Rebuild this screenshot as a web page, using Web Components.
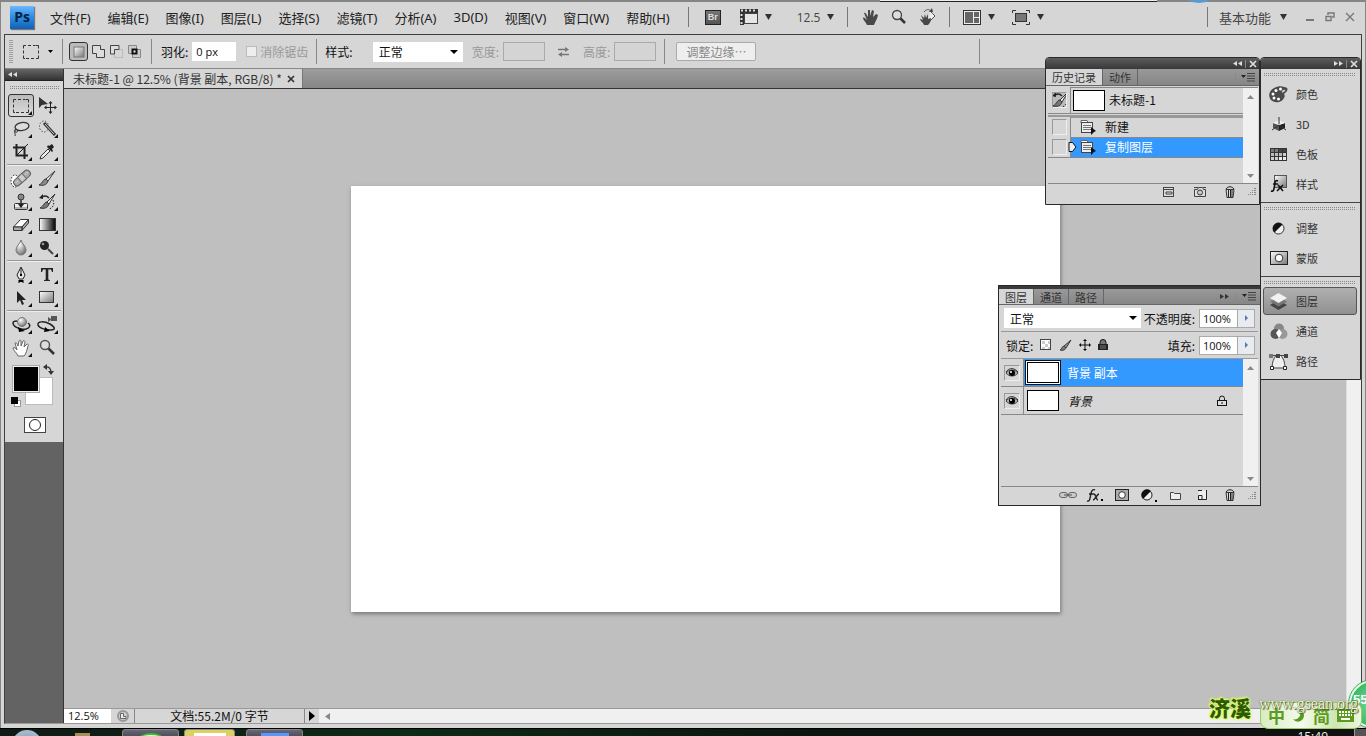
<!DOCTYPE html>
<html lang="zh-CN">
<head>
<meta charset="utf-8">
<title>Photoshop</title>
<style>
html,body{height:100%;margin:0}
body{font-family:"Open Sans","Noto Sans CJK SC",sans-serif;font-size:12px;color:#111;background:#d6d6d6;overflow:hidden}
</style>
</head>
<body>
<ps-app>
  <ps-menu-bar slot="menu"></ps-menu-bar>
  <ps-options-bar slot="options"></ps-options-bar>
  <ps-toolbox slot="tools"></ps-toolbox>
  <ps-document slot="document"></ps-document>
  <ps-history slot="float" class="history"></ps-history>
  <ps-layers slot="float" class="layers"></ps-layers>
  <ps-dock slot="float" class="dock"></ps-dock>
  <ps-taskbar slot="taskbar"></ps-taskbar>
  <ps-ime slot="float" class="ime"></ps-ime>
</ps-app>
<script>
const grad = '<defs><linearGradient id="g" x1="0" y1="0" x2="1" y2="1"><stop offset="0" stop-color="#fff"/><stop offset="1" stop-color="#777"/></linearGradient><linearGradient id="k"><stop offset="0" stop-color="#fff"/><stop offset="1" stop-color="#000"/></linearGradient><radialGradient id="r" cx=".35" cy=".3" r=".8"><stop offset="0" stop-color="#fff"/><stop offset="1" stop-color="#666"/></radialGradient></defs>';
const icons = {
  marquee:[16,14,'<path d="M.5 3.500V.5H3M5 .5h3M10 .5h2.500M13 .5h2.500v3M15.500 5.500v3M15.500 10.500v3H13M11 13.500H8M6 13.500H3M2 13.500H.5v-3M.5 8.500v-3" fill="none" stroke="#333"/>'],
  move:[20,20,'<path d="M2 1v11l3-3 6-1z" fill="#333"/><path d="M13.500 6v11M8 11.500h11" stroke="#222"/><path d="M13.500 5l2 2.500h-4zM13.500 18l2-2.500h-4zM7 11.500l2.500-2v4zM20 11.500l-2.500-2v4z" fill="#222"/>'],
  lasso:[18,16,'<ellipse cx="10" cy="5.500" rx="7" ry="4" transform="rotate(-10 10 5.500)" fill="#ddd" stroke="#333" stroke-width="1.300"/><path d="M4 8c-3 1-1 4 1 3s-1-4-2-1 1 3 0 5" fill="none" stroke="#333"/>'],
  wand:[19,18,'<ellipse cx="6" cy="6.500" rx="4.500" ry="5.500" fill="none" stroke="#555" stroke-dasharray="1.500 1.500"/><path d="M6 3l11 12" stroke="#333" stroke-width="3"/><path d="M7 4l9 10" stroke="#ccc"/>'],
  crop:[18,18,'<path d="M4.500 1v11.500H16M1 4.500h11.500V16" fill="none" stroke="#222" stroke-width="2"/><path d="M5 12L16 1" stroke="#222"/>'],
  dropper:[18,18,'<path d="M2 16l1-3 7-7 2 2-7 7z" fill="#eee" stroke="#333"/><path d="M9 4l5 5 1-1-1-2 2-2-2-3-3 2-1-1z" fill="#222"/>'],
  heal:[22,20,'<ellipse cx="5" cy="12" rx="4" ry="6" fill="#fff" stroke="#222" stroke-dasharray="1.500 1.500"/><g transform="rotate(-42 12 9)"><rect x="2" y="5.500" width="20" height="7" rx="3.500" fill="#aaa" stroke="#555"/><rect x="9" y="5.500" width="6" height="7" fill="#ccc" stroke="#666"/><path d="M4 8.500h4M17 8.500h3" stroke="#eee" stroke-dasharray="1 1"/></g>'],
  brush:[18,18,'<path d="M17 1L8 9l2 2z" fill="#eee" stroke="#333"/><path d="M8 9c-3 0-3 4-7 6 4 1 8 0 9-4z" fill="#888" stroke="#333"/>'],
  stamp:[18,18,'<circle cx="9" cy="4" r="3" fill="#888" stroke="#333"/><path d="M8 7h2v4H8z" fill="#555"/><rect x="2.500" y="10.500" width="13" height="6" rx="1" fill="#eee" stroke="#333"/><path d="M3 15h12" stroke="#777"/><path d="M6 11h6l-3 4z" fill="#222"/>'],
  historybrush:[19,18,'<path d="M17 1L9 9l2 2z" fill="#eee" stroke="#333"/><path d="M9 9c-3 0-3 4-7 6 4 1 8 0 9-4z" fill="#777" stroke="#333"/><path d="M3 5c3-3 6-2 8 0" fill="none" stroke="#222" stroke-width="1.500"/><path d="M1 5l4-4v5z" fill="#222"/><path d="M15 7c2 4 0 8-4 9" fill="none" stroke="#222" stroke-dasharray="1.500 1.500"/>'],
  eraser:[18,14,'<path d="M1.500 9l7-7.500h8L10 9z" fill="#fff" stroke="#333"/><path d="M1.500 9v3.500H10V9zM10 9l6.500-7.500V5L10 12.500z" fill="#aaa" stroke="#333"/>'],
  gradient:[17,13,'<rect x=".5" y=".5" width="16" height="12" fill="url(#k)" stroke="#333"/>'],
  blur:[14,17,'<path d="M7 1c1 4 5 6 5 10a5 5 0 0 1-10 0c0-4 4-6 5-10z" fill="url(#r)" stroke="#777"/>'],
  dodge:[16,16,'<path d="M9 9l5 5" stroke="#444" stroke-width="2"/><circle cx="5.500" cy="5.500" r="4.500" fill="#222"/><circle cx="4" cy="4" r="1.300" fill="#999"/>'],
  pen:[12,18,'<path d="M6 1L2 9l2 4h4l2-4z" fill="#eee" stroke="#222"/><path d="M6 2v6" stroke="#222"/><circle cx="6" cy="9" r="1.200"/><path d="M3.500 14h5v3h-1v-1h-3v1h-1z"/>'],
  type:[14,15,'<path d="M1 1h12v4h-1l-1-2.500H8.300V12.500l1.700.7V14H4v-.8l1.700-.7V2.500H3L2 5H1z" fill="#222"/>'],
  path:[12,16,'<path d="M2 1v12l3-3 2 5 2-1-2-4h4z" fill="#222"/>'],
  shape:[16,13,'<rect x=".5" y=".5" width="14" height="11" fill="url(#g)" stroke="#333"/>'],
  orbit:[20,18,'<path d="M17 7c3 2 2 5-2 6-5 1-13-2-13-6 0-2 3-2 4-2" fill="none" stroke="#222" stroke-width="1.500"/><circle cx="11" cy="6" r="4.500" fill="url(#r)" stroke="#777"/><path d="M7 11l7 4-6 1z"/>'],
  camera:[22,18,'<path d="M2 9C1 5 8 5 14 8c5 3 6 6 1 6C9 14 3 12 2 9z" fill="none" stroke="#222" stroke-width="1.500"/><path d="M9 11l5 4-6 1z"/><path d="M12 1v5l3-2V3zM15 0h6v5h-6z" fill="#555"/>'],
  hand:[18,18,'<path d="M6 17C5 14 1 11 1 9c1-1 3 0 4 2L3 4c1-1 2 0 3 3L7 2c1-1 2-1 2 0v5l2-5c1-1 2 0 2 1l-1 5 3-3c1 0 2 1 1 2-1 4-2 8-4 10z" fill="#fff" stroke="#666"/>'],
  zoom:[17,17,'<path d="M9 9l6 6" stroke="#333" stroke-width="2.500"/><circle cx="6" cy="6" r="4.500" fill="#ddd" stroke="#555" stroke-width="1.500"/>'],
  hand2:[17,17,'<path d="M5 16C4 13 1 11 1 9c1-1 2 0 4 2L2 4c1-1 2 0 4 4V1h2v6l2-6 2 1-1 6 3-3 2 1c-1 5-3 7-4 10z" fill="#484848"/>'],
  zoom2:[16,16,'<path d="M9 9l5 5" stroke="#333" stroke-width="2.500"/><circle cx="6" cy="6" r="4.500" fill="#ddd" stroke="#444" stroke-width="1.300"/>'],
  rotate:[18,18,'<path d="M11 3l5 5-6 6" fill="#eee" stroke="#555"/><path d="M5 17c-1-3-4-4-4-6l3 1-2-5 3 3 1-4 1 4 2-4v5l3-1c0 3-1 5-3 7z" fill="#484848"/><path d="M5 4c2-3 5-3 7-1" fill="none" stroke="#555"/><path d="M14 4h-4l3-4z" fill="#444"/>'],
  film:[18,16,'<path d="M0 0h18v4H4v12H0z" fill="#333"/><path d="M1 1.500h16" stroke="#ddd" stroke-width="2" stroke-dasharray="2 2"/><path d="M1.500 5v10" stroke="#ddd" stroke-width="2" stroke-dasharray="2 2"/><rect x="4.500" y="4.500" width="13" height="10" fill="#e6e6e6" stroke="#444"/>'],
  arrange:[18,15,'<rect x=".5" y=".5" width="17" height="14" fill="#eee" stroke="#333"/><path d="M2 2h8v11H2zM11 2h5v5h-5zM11 8h5v5h-5z" fill="#666"/>'],
  screen:[18,15,'<path d="M.5 3V.5H4M14 .5h3.500V3M17.500 12v2.500H14M4 14.500H.5V12" fill="none" stroke="#333"/><rect x="3.500" y="3.500" width="11" height="8" fill="#777" stroke="#333"/>'],
  down:[7,6,'<path d="M0 0h7L3.500 6z" fill="#333"/>'],
  down5:[5,3,'<path d="M0 0h5L2.500 3z"/>'],
  min:[10,10,'<path d="M1 8h8" stroke="#777" stroke-width="2"/>'],
  restore:[10,10,'<path d="M3 3V1h6v4H7M1 4.500h5v4H1z" fill="none" stroke="#777" stroke-width="1.400"/>'],
  close:[10,10,'<path d="M1 1l8 8M9 1L1 9" stroke="#777" stroke-width="1.300"/>'],
  x:[8,8,'<path d="M1 1l6 6M7 1L1 7" stroke="currentColor" stroke-width="1.700"/>'],
  left2:[9,5,'<path d="M4 0v5L0 2.500zM9 0v5L5 2.500z" fill="currentColor"/>'],
  right2:[9,5,'<path d="M0 0v5l4-2.500zM5 0v5l4-2.500z" fill="currentColor"/>'],
  flyout:[14,9,'<path d="M0 2h5L2.500 5z" fill="#222"/><path d="M6 .5h8M6 3h8M6 5.500h8M6 8h8" stroke="#444"/>'],
  selnew:[12,12,'<rect x="1" y="1" width="10" height="10" fill="url(#g)" stroke="#777"/>'],
  seladd:[14,14,'<path d="M.5.500h8v4h4v8h-8v-4h-4z" fill="#ddd" stroke="#444"/>'],
  selsub:[14,14,'<rect x="4.500" y="4.500" width="8" height="8" fill="none" stroke="#bbb"/><path d="M.5 9V.500H9v4H4.500V9z" fill="#ddd" stroke="#444"/>'],
  selint:[14,14,'<path d="M.5.500h8v8h-8zM4.500 4.500h8v8h-8z" fill="#ccc" stroke="#888"/><rect x="4.500" y="4.500" width="4" height="4" fill="#eee" stroke="#111" stroke-width="2"/>'],
  swap:[13,10,'<path d="M1 2.500h8M4 7.500h8" stroke="#777" stroke-width="1.500"/><path d="M8 0l4 2.500L8 5zM5 5L1 7.500 5 10z" fill="#777"/>'],
  swapcolors:[11,11,'<path d="M2 3c4-1 6 2 6 5" fill="none" stroke="#333" stroke-width="1.300"/><path d="M0 3l4-3v6zM5 7h6l-3 4z" fill="#333"/>'],
  defcolors:[10,10,'<rect x="3.500" y="3.500" width="6" height="6" fill="#fff" stroke="#999"/><rect width="7" height="7"/>'],
  mask:[18,14,'<rect x=".5" y=".5" width="17" height="13" fill="url(#g)" stroke="#222"/><circle cx="9" cy="7" r="3.800" fill="#fff" stroke="#333"/>'],
  maskf:[14,12,'<rect x=".5" y=".5" width="13" height="11" fill="#aaa" stroke="#222"/><circle cx="7" cy="6" r="3.300" fill="#fff" stroke="#333"/>'],
  palette:[19,17,'<path d="M15 1c5 0 4 4 1 6-2 1 1 3-1 5-2 4-6 5-9 4-5-1-7-6-5-10C3 2 10-1 15 1z" fill="#4a4a4a"/><path d="M13 5c2-2 4-1 3 0s-4 3-3 0z" fill="#ccc"/><g fill="#fff"><circle cx="4" cy="8" r="1.500"/><circle cx="7" cy="4.500" r="1.500"/><circle cx="11.500" cy="3" r="1.500"/><circle cx="5" cy="12" r="1.500"/><circle cx="9.500" cy="13" r="1.500"/></g>'],
  cube:[16,16,'<path d="M2 7l6 2v6l-6-3z" fill="#555"/><path d="M14 7l-6 2v6l6-3z" fill="#222"/><path d="M2 7l6-3 6 3-6 2z" fill="#eee"/><path d="M8 1v7M8 9l7 5M8 9l-7 5" stroke="#333"/>'],
  swatches:[17,13,'<path d="M0 0h17v13H0z" fill="#333"/><path d="M1 1h3v3H1zM5 1h3v3H5z" fill="#777"/><path d="M9 1h3v3H9zM13 1h3v3h-3z" fill="#444"/><path d="M1 5h3v3H1zM5 5h3v3H5zM9 5h3v3H9z" fill="#bbb"/><path d="M13 5h3v3h-3zM1 9h3v3H1zM5 9h3v3H5z" fill="#ccc"/><path d="M9 9h3v3H9zM13 9h3v3h-3z" fill="#eee"/>'],
  styles:[18,18,'<rect x="4.500" y=".5" width="12" height="12" fill="url(#g)" stroke="#555"/><path d="M1 16c3 1 3-2 4-8 0-2 1-3 3-2M3 9h5M8 10l5 6M13 10l-6 6" fill="none" stroke="#111" stroke-width="1.600"/>'],
  adjust:[13,13,'<circle cx="6.500" cy="6.500" r="5.500" fill="#eee" stroke="#333"/><path d="M2.500 10.500A5.600 5.600 0 0 1 10.500 2.500z" fill="#111"/>'],
  layers:[19,17,'<path d="M9.500 7l8.500 5-8.500 5L1 12z" fill="#444"/><path d="M9.500 4L18 8.500l-8.500 5L1 8.500z" fill="#777"/><path d="M9.500 0L18 5l-8.500 5L1 5z" fill="#f2f2f2"/>'],
  channels:[18,17,'<circle cx="9" cy="5.500" r="5" fill="#888"/><circle cx="5.500" cy="11" r="5" fill="#555"/><circle cx="12.500" cy="11" r="5" fill="#999"/><path d="M9 6l3 4-3 5-3-5z" fill="#fff"/>'],
  paths:[19,17,'<path d="M3 15C3 9 5 5 7 2.500h5c2 3 4 6 4 12.500z" fill="#eee" stroke="#444"/><path d="M2 2.500h15" stroke="#444"/><path d="M0 1h4v4H0z" fill="#777"/><path d="M7 1h4v4H7zM15 1h4v4h-4z" fill="#444"/><path d="M1.500 13.500h3v3h-3zM14.500 13.500h3v3h-3z" fill="#fff" stroke="#222"/>'],
  state:[16,16,'<path d="M1 4V1.500h6l1 2" fill="#fff" stroke="#666"/><rect x="1.500" y="3.500" width="11" height="10" fill="#eee" stroke="#444"/><path d="M3 6.500h8M3 8.500h8M3 10.500h8" stroke="#777"/><path d="M11 8l5 4-2 1-3 3z" fill="#111"/>'],
  marker:[9,10,'<path d="M1 .500h3.500L8 5 4.500 9.500H1z" fill="#eee" stroke="#111"/>'],
  newdoc:[12,10,'<rect x=".5" y=".5" width="10" height="9" fill="#ddd" stroke="#444"/><path d="M1 2.500h10M3 5h6v2H3z" stroke="#444" fill="none"/>'],
  snap:[14,11,'<path d="M1.500 3.500h3l1-2h4l1 2h2v7h-11z" fill="#ddd" stroke="#444"/><path d="M1 1.500h4M10 1.500h3" stroke="#444"/><circle cx="7" cy="6.500" r="2.500" fill="#ccc" stroke="#333"/>'],
  trash:[10,12,'<path d="M1 3.500h8L8 11.500H2z" fill="#ddd" stroke="#333"/><path d="M3.500 4v7M5.500 4v7M7 4v7M1 3c2-3 6-3 8 0" stroke="#222" fill="none"/>'],
  grip:[9,9,'<path d="M7 1h2v1H7zM5 3h1v1H5zM7 3h2v1H7zM3 5h1v1H3zM5 5h1v1H5zM7 5h2v1H7zM1 7h1v1H1zM3 7h1v1H3zM5 7h1v1H5zM7 7h2v1H7z" fill="#888"/>'],
  checker:[12,12,'<rect x=".5" y=".5" width="10" height="10" fill="#fff" stroke="#444"/><path d="M2 2h3v3H2zM5 5h3v3H5zM8 2h2v3H8zM2 8h3v2H2zM8 8h2v2H8z" fill="#ccc"/>'],
  brush12:[13,13,'<path d="M12 1L5 7l2 2z" fill="#999" stroke="#333"/><path d="M5 7c-2 0-2 3-4 4 3 1 5 0 6-2z" fill="#777" stroke="#444"/>'],
  cross:[12,12,'<path d="M6 1v10M1 6h10" stroke="#111"/><path d="M6 0l2 2H4zM6 12l2-2H4zM0 6l2-2v4zM12 6l-2-2v4z"/>'],
  lockf:[10,12,'<path d="M2 5V3.500a3 3 0 0 1 6 0V5" fill="#777" stroke="#111"/><path d="M0 5h10v6H0z" fill="#222"/><path d="M2 7h6M2 9h6" stroke="#777"/>'],
  lock:[10,12,'<path d="M2.500 5V3.500a2.500 2.500 0 0 1 5 0V5" fill="none" stroke="#111"/><rect x=".5" y="5.500" width="9" height="5" fill="#ddd" stroke="#111"/><path d="M5 7v2" stroke="#111"/>'],
  eye:[14,10,'<path d="M1 5c3-4 9-4 12 0-3 4-9 4-12 0z" fill="#aaa" stroke="#444"/><circle cx="7" cy="5" r="3"/><path d="M1 4c3-5 9-4 12 0" fill="none" stroke="#333"/><circle cx="6" cy="4" r="1" fill="#fff"/>'],
  link:[18,8,'<rect x=".5" y="1.500" width="8" height="5" rx="2.500" fill="#ccc" stroke="#666"/><rect x="9.500" y="1.500" width="8" height="5" rx="2.500" fill="#ccc" stroke="#666"/><path d="M5 4h8" stroke="#555"/>'],
  fx:[17,14,'<path d="M1 13c3 1 3-3 4-8 1-3 2-4 4-3M3 6h5M8 6c2 0 2 6 4 6M13 6c-2 0-4 6-6 6" fill="none" stroke="#222" stroke-width="1.400"/><path d="M15 11h2v2h-2z"/>'],
  adjustf:[16,13,'<circle cx="6" cy="6" r="5" fill="#eee" stroke="#222"/><path d="M2 10A5.600 5.600 0 0 1 10 2z" fill="#111"/><path d="M14 11h2v2h-2z"/>'],
  folder:[12,9,'<path d="M.5 8.500v-7h3l1 1h6v6z" fill="#eee" stroke="#444"/>'],
  newlayer:[11,11,'<path d="M1.500.500h8v9h-8z" fill="#eee"/><path d="M1 .500h4M9.500 0v9.500H1M1.500 10V5.500H5V9" fill="none" stroke="#222"/>'],
  up7:[7,4,'<path d="M0 4h7L3.500 0z" fill="#888"/>'],
  dn7:[7,4,'<path d="M0 0h7L3.500 4z" fill="#888"/>'],
  clockface:[12,12,'<circle cx="6" cy="6" r="5" fill="#ccc" stroke="#999" stroke-width="2"/><path d="M3.500 3.500h3v3H9v2H3.500z" fill="#eee" stroke="#666"/>'],
  play:[6,10,'<path d="M0 0v10l6-5z"/>'],
  tri:[3,6,'<path d="M0 0v6l3-3z" fill="#5878b0"/>'],
  back:[5,7,'<path d="M5 0v7L0 3.500z" fill="#888"/>'],
  keyboard:[17,13,'<path d="M0 0h17v13H0z" fill="#5b9b20"/><path d="M2 3h13M2 6h13" stroke="#fff" stroke-width="2" stroke-dasharray="2 1"/><path d="M4 10h9" stroke="#fff" stroke-width="2"/>'],
  moon:[14,14,'<path d="M8 1a6 6 0 1 1-7 9c4 2 9-3 7-9z" fill="#5b9b20"/>']
};
const base = '<style>*,:host{box-sizing:border-box}button,input,select{font:inherit;color:inherit;margin:0;padding:0;border:0;background:none;border-radius:0;outline:0}button{display:flex;align-items:center;justify-content:center;white-space:nowrap}</style>';
const ic = n => `<ps-icon name="${n}"></ps-icon>`;
function define(name, html, setup){
  const t = document.createElement('template');
  t.innerHTML = base + html;
  customElements.define(name, class extends HTMLElement{
    constructor(){ super(); this.attachShadow({mode:'open'}).append(t.content.cloneNode(true)); if(setup) setup(this.shadowRoot, this); }
  });
}
customElements.define('ps-icon', class extends HTMLElement{
  connectedCallback(){
    if(this.shadowRoot) return;
    const [w,h,s] = icons[this.getAttribute('name')];
    this.attachShadow({mode:'open'}).innerHTML = `<style>:host{display:block;flex:none}svg{display:block}</style><svg width="${w}" height="${h}" viewBox="0 0 ${w} ${h}" aria-hidden="true">${s.includes('url(')?grad:''}${s}</svg>`;
  }
});
define('ps-grip', '<style>:host{display:block;height:4px;background:repeating-linear-gradient(90deg,#888 0 1px,transparent 1px 2px) 0 0/100% 1px repeat-x,repeating-linear-gradient(90deg,#888 0 1px,transparent 1px 2px) 0 2px/100% 1px repeat-x}</style>');

define('ps-app', `<style>
:host{display:flex;flex-direction:column;height:100vh;position:relative;overflow:hidden;background:#d6d6d6}
.frame{flex:1;min-height:0;display:flex;flex-direction:column;border:1px solid #858585;border-bottom:0;border-top-width:2px;padding:0 3px 4px}
.inner{flex:1;min-height:0;display:flex;flex-direction:column;border:1px solid #3c423c;border-bottom-color:#999}
.work{flex:1;min-height:0;display:flex}
slot[name=tools]{display:block}
slot[name=document]::slotted(*){flex:1;min-width:0}
::slotted(.history){position:absolute;right:106px;top:57px}
::slotted(.layers){position:absolute;right:105px;top:285px}
::slotted(.dock){position:absolute;right:5px;top:57px}
::slotted(.ime){position:absolute;right:0;bottom:7px}
.sheet{position:absolute;left:880px;top:0;right:209px;height:2px;background:#eee;border-bottom:1px solid #222}
.orb{position:absolute;right:152px;top:-15px;width:30px;height:18px;border-radius:50%;background:#5a9ad0}
</style>
<div class="frame"><slot name="menu"></slot><div class="inner"><slot name="options"></slot><div class="work"><slot name="tools"></slot><slot name="document"></slot></div></div></div>
<slot name="taskbar"></slot><div class="sheet"></div><div class="orb"></div><slot name="float"></slot>`);

define('ps-menu-bar', `<style>
:host{display:flex;height:32px;align-items:center;padding:0 7px 2px 6px;font-size:13px;color:#222}
.logo{width:24px;height:23px;background:linear-gradient(#6cb8ff,#2f8fe4 45%,#0f62b4);color:#06203f;font:bold 14px/21px "Open Sans",sans-serif;text-align:center;margin-right:16px;box-shadow:1px 1px 1px #777}
nav{display:flex;gap:17px}
nav button{height:24px;font-family:"Noto Sans","Noto Sans CJK SC",sans-serif}
.sep{width:1px;height:20px;background:#777;flex:none}
.tools{display:flex;align-items:center;margin-left:18px}
.pair{gap:7px}
.br{width:16px;height:15px;background:linear-gradient(#777,#555);border:1px solid #222;color:#ddd;font:bold 9px/12px "Liberation Sans",sans-serif}
.right{display:flex;align-items:center;margin-left:auto;gap:11px}
.right .pair{color:#444;gap:9px}
.win{display:flex;gap:10px;margin-left:7px}
.z{font-size:12px;font-family:"Open Sans",sans-serif;color:#444}
</style>
<div class="logo">Ps</div><nav></nav>
<div class="tools"><i class="sep"></i><button class="br" style="margin:0 19px 0 16px">Br</button><button class="pair">${ic('film')}${ic('down')}</button>
<button class="pair z" style="margin:0 13px 0 25px">12.5${ic('down')}</button><i class="sep"></i>
<button style="margin-left:14px">${ic('hand2')}</button><button style="margin:0 12px">${ic('zoom2')}</button><button style="margin-right:12px">${ic('rotate')}</button><i class="sep"></i>
<button class="pair" style="margin:0 17px 0 13px">${ic('arrange')}${ic('down')}</button><button class="pair">${ic('screen')}${ic('down')}</button></div>
<div class="right"><i class="sep"></i><button class="pair">基本功能${ic('down')}</button><div class="win"><button aria-label="最小化">${ic('min')}</button><button aria-label="还原">${ic('restore')}</button><button aria-label="关闭">${ic('close')}</button></div></div>`,
r => { r.querySelector('nav').innerHTML = ['文件(F)','编辑(E)','图像(I)','图层(L)','选择(S)','滤镜(T)','分析(A)','3D(D)','视图(V)','窗口(W)','帮助(H)'].map(x=>`<button>${x}</button>`).join(''); });

define('ps-options-bar', `<style>
:host{display:flex;height:34px;align-items:center;border-bottom:1px solid #888;padding-left:4px;white-space:nowrap;font-family:"Noto Sans CJK SC",sans-serif}
.sep{width:1px;height:25px;background:#888;flex:none}
.grip{width:4px;height:23px;background:repeating-linear-gradient(#888 0 1px,transparent 1px 2px);opacity:.7}
.tool{gap:9px;margin:0 9px 0 10px}
.modes{display:flex;align-items:center;gap:3px;margin:0 9px 0 6px}
.modes .on{width:19px;height:19px;border:1px solid #333;border-radius:3px;background:#bbb}
.modes button{width:15px}
.field{display:flex;align-items:center}
input[type=text]{height:19px;width:44px;background:#fff;padding-left:4px;margin-left:4px;font-family:"Open Sans",sans-serif;font-size:11px}
input[type=text]:disabled{background:#d4d4d4;border:1px solid #aaa;width:42px}
.off{color:#999}
input[type=checkbox]{appearance:none;width:11px;height:11px;border:1px solid #bbb;background:#eee;margin-right:3px}
select{appearance:none;width:90px;height:20px;background:#fff url("data:image/svg+xml,%3Csvg xmlns='http://www.w3.org/2000/svg' width='8' height='4'%3E%3Cpath d='M0 0h8L4 4z'/%3E%3C/svg%3E") no-repeat right 5px center;padding-left:6px;margin-left:20px}
.edge{width:80px;height:19px;border:1px solid #aaa;border-radius:2px;background:#eee;color:#888}
</style>
<div class="grip"></div><button class="tool" aria-label="矩形选框">${ic('marquee')}${ic('down5')}</button><i class="sep"></i>
<div class="modes"><button class="on" aria-label="新选区">${ic('selnew')}</button><button aria-label="添加">${ic('seladd')}</button><button aria-label="减去">${ic('selsub')}</button><button aria-label="交叉">${ic('selint')}</button></div><i class="sep"></i>
<label class="field" style="margin:0 10px 0 9px">羽化:<input type="text" value="0 px"></label>
<label class="field off"><input type="checkbox" disabled>消除锯齿</label><i class="sep" style="margin:0 8px"></i>
<label class="field">样式:<select><option>正常</option></select></label>
<label class="field off" style="margin:0 12px 0 9px">宽度:<input type="text" disabled></label><ps-icon name="swap"></ps-icon>
<label class="field off" style="margin:0 8px 0 13px">高度:<input type="text" disabled></label><i class="sep"></i>
<button class="edge" style="margin-left:11px">调整边缘…</button><i class="sep" style="margin-left:223px"></i>`);

define('ps-toolbox', `<style>
:host{display:flex;flex-direction:column;width:59px;height:100%;background:#636363;border-right:1px solid #333}
.head{height:12px;background:linear-gradient(#666,#333);color:#ddd;padding:3px 3px;border-bottom:1px solid #222}
.box{background:#d6d6d6;padding:5px 0 9px;flex:none}
ps-grip{margin:0 4px 4px 5px}
.group{display:grid;grid-template-columns:26px 26px;padding-left:3px;grid-auto-rows:23px}
.group button{position:relative;width:26px;height:23px;border:1px solid transparent}
.group button.on{border-color:#333;border-radius:3px;background:linear-gradient(#bbb,#ddd)}
.group button.more::after{content:"";position:absolute;right:1px;bottom:1px;border:2px solid #111;border-top-color:transparent;border-left-color:transparent}
.rule{height:1px;background:#999;margin:1px 2px 2px;box-shadow:0 1px #eee}
.colors{position:relative;height:47px;margin:4px 0 7px}
.colors button{position:absolute}
.fg{left:8px;top:3px;width:26px;height:26px;background:#000;border:1px solid #eee;outline:1px solid #aaa}
.bg{left:20px;top:14px;width:28px;height:28px;background:#fff;border:1px solid #bbb}
.qm{width:22px;height:16px;border:1px solid #444;background:#fff;margin-left:19px}
.qm i{width:12px;height:12px;border:1px solid #222;border-radius:50%}
</style><div class="head">${ic('left2')}</div><div class="box"><ps-grip></ps-grip><div class="groups"></div>
<div class="colors"><button class="bg" aria-label="背景色"></button><button class="fg" aria-label="前景色"></button><button style="left:38px;top:1px" aria-label="切换颜色">${ic('swapcolors')}</button><button style="left:6px;top:34px" aria-label="默认颜色">${ic('defcolors')}</button></div>
<button class="qm" aria-label="快速蒙版"><i></i></button></div>`,
r => { r.querySelector('.groups').innerHTML = [['marquee','move','lasso','wand','crop','dropper'],['heal','brush','stamp','historybrush','eraser','gradient','blur','dodge'],['pen','type','path','shape'],['orbit','camera','hand','zoom']]
 .map(g=>'<div class="group">'+g.map(n=>`<button aria-label="${n}" class="${n==='marquee'?'on ':''}${n==='move'||n==='zoom'?'':'more'}">${ic(n)}</button>`).join('')+'</div>').join('<div class="rule"></div>'); });

define('ps-document', `<style>
:host{display:flex;flex-direction:column}
.tabs{height:20px;background:linear-gradient(#9c9c9c,#868686);border-bottom:1px solid #333;display:flex;flex:none}
.tab{width:239px;height:19px;background:#d6d6d6;border-right:1px solid #777;display:flex;align-items:center;justify-content:space-between;padding:0 7px 0 9px;white-space:nowrap;color:#333;font-family:"Noto Sans CJK SC",sans-serif}
.view{flex:1;min-height:0;display:flex}
.canvas{flex:1;background:#bfbfbf;display:flex;align-items:center;justify-content:center}
.page{width:709px;height:426px;background:#fff;box-shadow:1px 2px 4px #777}
.vs{width:15px;background:#f0f0f0;flex:none;border-left:1px solid #ddd}
.status{height:15px;flex:none;display:flex;align-items:center;background:#d6d6d6;border-top:1px solid #999;font-family:"Noto Sans CJK SC",sans-serif;line-height:14px;white-space:nowrap}
.status input{width:47px;height:14px;background:#fff;font-size:11px;padding-left:4px;font-family:"Open Sans",sans-serif}
.info{width:171px;height:14px;text-align:center;border:1px solid #888;border-width:0 1px;margin-left:5px}
.hs{flex:1;height:14px;background:#f0f0f0;margin-left:4px;display:flex;align-items:center;padding-left:6px}
</style>
<div class="tabs"><div class="tab"><span>未标题-1 @ 12.5% (背景 副本, RGB/8) *</span><button aria-label="关闭">${ic('x')}</button></div></div>
<div class="view"><div class="canvas"><div class="page"></div></div><div class="vs"></div></div>
<div class="status"><input aria-label="缩放" value="12.5%"><button style="margin-left:6px" aria-label="版本">${ic('clockface')}</button><div class="info">文档:55.2M/0 字节</div><button style="margin-left:4px" aria-label="菜单">${ic('play')}</button><div class="hs">${ic('back')}</div></div>`);

define('ps-panel', `<style>
:host{display:flex;flex-direction:column;border:1px solid #2a2a2a;background:#d6d6d6}
.head{height:11px;flex:none;background:linear-gradient(#5c5c5c,#383838);color:#ddd;display:flex;align-items:center;justify-content:flex-end;padding-right:2px;gap:3px}
.head i,.tabs i{width:1px;height:8px;background:#888}
:host([thin]) .head{height:3px;overflow:hidden;visibility:hidden}
:host([thin]){background:linear-gradient(#3a3a3a 3px,#d6d6d6 3px)}
.tabs{height:17px;display:flex;background:linear-gradient(#999,#868686);border-bottom:1px solid #666;align-items:center;flex:none}
:host([thin]) .tabs{height:16px}
.extra{margin-left:auto;display:flex;align-items:center;gap:5px;padding-right:4px;color:#333}
:host([thin]) .extra{gap:6px}
:host(:not([thin])) .x{display:none}
slot[name=body]::slotted(*){flex:1}
.foot{height:18px;flex:none;padding-bottom:2px;display:flex;align-items:center;justify-content:flex-end}
:host(:not([thin])) .foot{height:20px;padding-bottom:5px}
</style><div class="head">${ic('left2')}<i></i>${ic('x')}</div>
<div class="tabs"><slot name="tab"></slot><div class="extra"><ps-icon class="x" name="right2"></ps-icon><i></i>${ic('flyout')}</div></div>
<slot name="body"></slot><div class="foot"><slot name="foot"></slot></div>`);
const tabCss = '.tab{height:100%;padding:0 6px;border-right:1px solid #666;font-size:11px;color:#333;font-family:"Noto Sans CJK SC",sans-serif}.tab.on{background:#d6d6d6}';
const scroll = `<div class="scroll">${ic('up7')}${ic('dn7')}</div>`;
const scrollCss = '.scroll{width:15px;background:#f0f0f0;display:flex;flex-direction:column;align-items:center;justify-content:space-between;padding:7px 0 5px;flex:none}';

define('ps-history', `<style>
:host{display:block;width:215px}${tabCss}${scrollCss}
ps-panel{height:148px;border-radius:4px 4px 0 0;overflow:hidden}
.body{display:flex;margin:1px 1px 0 2px;min-height:0;border-top:1px solid #888;border-bottom:1px solid #888}
.list{flex:1;font-family:"Noto Sans CJK SC",sans-serif}
.row{height:20px;display:flex;align-items:center;border-bottom:1px solid #888;line-height:16px;padding-bottom:1px}
.c{width:23px;height:20px;border-right:1px solid #888;display:flex;align-items:center;justify-content:center;flex:none;position:relative;background:#d6d6d6}
.c i{width:15px;height:16px;border:1px solid #999;border-right-color:#eee;border-bottom-color:#eee}
.c .ib{overflow:hidden;background:#bbb}
.snap{height:26px}.snap .c{height:26px}.thumb{width:32px;height:21px;border:1px solid #000;background:#fff;margin:0 4px 0 2px}
.bar{height:4px;border-bottom:3px solid #999}
.row ps-icon{margin:0 9px 0 9px}.row .ib ps-icon{margin:-2px}
.sel{background:#39f;color:#fff}.sel .c ps-icon{position:absolute;right:-7px;margin:0}
.ft{display:flex;align-items:center;gap:18px;padding-right:3px}.ft button:last-child{margin-left:-6px}
</style><ps-panel><button slot="tab" class="tab on">历史记录</button><button slot="tab" class="tab">动作</button>
<div slot="body" class="body"><div class="list"><div class="row snap"><span class="c"><i class="ib">${ic('historybrush')}</i></span><span class="thumb"></span>未标题-1</div><div class="bar"></div>
<div class="row"><span class="c"><i></i></span>${ic('state')}新建</div><div class="row sel"><span class="c"><i></i>${ic('marker')}</span>${ic('state')}复制图层</div></div>${scroll}</div>
<div slot="foot" class="ft"><button aria-label="新文档">${ic('newdoc')}</button><button aria-label="快照">${ic('snap')}</button><button aria-label="删除">${ic('trash')}</button><button aria-label="调整大小">${ic('grip')}</button></div></ps-panel>`);

define('ps-layers', `<style>
:host{display:block;width:263px}${tabCss}${scrollCss}
ps-panel{height:221px}
.body{display:flex;flex-direction:column;margin:0 2px;font-family:"Noto Sans CJK SC",sans-serif;min-height:0;border-bottom:1px solid #888}
.row{height:27px;display:flex;align-items:center;border-bottom:1px solid #999;padding:0 3px;flex:none}
select{appearance:none;width:137px;height:20px;background:#fff url("data:image/svg+xml,%3Csvg xmlns='http://www.w3.org/2000/svg' width='8' height='4'%3E%3Cpath d='M0 0h8L4 4z'/%3E%3C/svg%3E") no-repeat right 4px center;padding-left:6px}
label{display:flex;align-items:center;margin-left:auto}
label input{width:39px;height:19px;border:1px solid #aaa;background:#fff;margin-left:4px;padding-left:3px;font-family:"Open Sans",sans-serif;font-size:11px}
.row button.spin{width:17px;height:19px;border:1px solid #aaa;border-left:0;background:#e8ebf0}
.locks{display:flex;gap:7px;margin-left:7px}
.area{flex:1;display:flex;min-height:0}.list{flex:1}
.layer{height:28px;display:flex;align-items:center;border-bottom:1px solid #888}
.eye{width:23px;align-self:stretch;border-right:1px solid #888;background:#d6d6d6;display:flex;align-items:center;justify-content:center}
.eye button{width:16px;height:16px;border:1px solid #999;border-right-color:#eee;border-bottom-color:#eee}
.thumb{width:32px;height:21px;border:1px solid #000;background:#fff;margin:0 9px 0 3px}
.sel{background:#39f;color:#fff}.sel .thumb{outline:1px solid #fff;box-shadow:0 0 0 2px #111;margin-right:8px}
em{flex:1}.lk{margin-right:16px}
.ft{display:grid;grid-template-columns:repeat(7,27px) 17px;justify-items:center;align-items:center}
</style><ps-panel thin><button slot="tab" class="tab on">图层</button><button slot="tab" class="tab">通道</button><button slot="tab" class="tab">路径</button>
<div slot="body" class="body"><div class="row"><select aria-label="混合模式"><option>正常</option></select><label>不透明度:<input value="100%"></label><button class="spin" aria-label="不透明度">${ic('tri')}</button></div>
<div class="row"><span style="margin-left:2px">锁定:</span><span class="locks">${ic('checker')}${ic('brush12')}${ic('cross')}${ic('lockf')}</span><label>填充:<input value="100%"></label><button class="spin" aria-label="填充">${ic('tri')}</button></div>
<div class="area"><div class="list"><div class="layer sel"><span class="eye"><button aria-label="可见">${ic('eye')}</button></span><span class="thumb"></span>背景 副本</div>
<div class="layer"><span class="eye"><button aria-label="可见">${ic('eye')}</button></span><span class="thumb"></span><em>背景</em><ps-icon class="lk" name="lock"></ps-icon></div></div>${scroll}</div></div>
<div slot="foot" class="ft"><button>${ic('link')}</button><button>${ic('fx')}</button><button>${ic('maskf')}</button><button>${ic('adjustf')}</button><button>${ic('folder')}</button><button>${ic('newlayer')}</button><button>${ic('trash')}</button><button>${ic('grip')}</button></div></ps-panel>`);

define('ps-dock', `<style>
:host{display:block;width:101px;border:1px solid #2a2a2a;background:#d6d6d6;border-radius:4px 4px 0 0;overflow:hidden;font-size:11px;color:#333;font-family:"Noto Sans CJK SC",sans-serif}
.head{height:11px;background:linear-gradient(#5c5c5c,#383838);color:#ddd;display:flex;align-items:center;justify-content:flex-end;padding-right:2px;gap:3px}
.head i{width:1px;height:8px;background:#888}
section{border-bottom:1px solid #444;padding:4px 3px 3px 2px}
section:last-child{border:0}
ps-grip{margin:0 1px 2px}
section button{width:100%;height:30px;justify-content:flex-start;border:1px solid transparent}
section button.on{border-color:#555;border-radius:3px;background:linear-gradient(#b0b0b0,#909090);height:28px;margin:1px 0}
.i{width:32px;display:flex;justify-content:center;padding-right:3px}
</style><div class="head">${ic('right2')}<i></i>${ic('x')}</div><div class="all"></div>`,
r => { r.querySelector('.all').innerHTML=[[['palette','颜色'],['cube','3D'],['swatches','色板'],['styles','样式']],[['adjust','调整'],['mask','蒙版']],[['layers','图层'],['channels','通道'],['paths','路径']]]
 .map(s=>'<section><ps-grip></ps-grip>'+s.map(([i,t])=>`<button class="${i==='layers'?'on':''}"><span class="i">${ic(i)}</span>${t}</button>`).join('')+'</section>').join(''); });

define('ps-taskbar', `<style>
:host{display:flex;height:8px;flex:none;background:linear-gradient(90deg,#101a16,#0c2a16 30%,#0b1510 60%,#111);overflow:hidden;border-top:1px solid #000;align-items:flex-start;color:#eee;font-size:12px;line-height:12px}
.orb{width:30px;height:30px;border-radius:50%;background:radial-gradient(#79a,#bcd);margin-left:12px;margin-top:1px;flex:none}
.f{width:15px;height:5px;background:#a98f57;margin:4px 32px 0 33px}
.t{width:57px;height:16px;border:1px solid #888;border-radius:3px;background:linear-gradient(#667,#333);margin-right:5px;display:flex;justify-content:center;overflow:hidden}
.y{width:51px;background:#dcd060;margin-right:11px}.y i{width:32px;height:9px;background:#fff;margin-top:3px}
.b i{width:28px;height:9px;background:#59f;margin-top:3px}.g i{width:24px;height:12px;border-radius:50%;background:#dfd;border-top:2px solid #4b3;margin-top:3px}
time{margin-left:auto;margin-right:26px;padding-top:2px}.d{width:12px;height:8px;background:#555;border-left:1px solid #999}
</style><div class="orb"></div><div class="f"></div><div class="t g"><i></i></div><div class="t y"><i></i></div><div class="t b"><i></i></div><time>15:49</time><div class="d"></div>`);

define('ps-ime', `<style>
:host{display:block;width:160px;height:52px;overflow:hidden}
.ball{position:absolute;right:-31px;top:3px;width:48px;height:48px;border-radius:50%;background:radial-gradient(#7d9,#2a5);border:2px solid #dfd;outline:1px solid #4a5;color:#fff;font:bold 13px/36px "Liberation Sans",sans-serif;padding-left:2px}
.bar{position:absolute;left:54px;bottom:0;width:102px;height:27px;border:1px solid #9c6;border-radius:8px;background:linear-gradient(90deg,#d8ecc0,#f4faec 40%,#cfe6b0 75%,#eef6e0);display:flex;align-items:center;gap:7px;padding-left:7px;color:#5b9b20;font:bold 17px/24px "Noto Sans CJK SC",sans-serif}
.mark{position:absolute;left:3px;top:19px;font:900 21px/22px "Noto Sans CJK SC",sans-serif;color:#2c5a08;text-shadow:0 0 2px #df6,0 0 3px #df6,1px 1px 2px #df6,-1px -1px 2px #df6}
.url{position:absolute;left:53px;top:18px;font:16px/18px "Liberation Serif",serif;color:#f4f8d0;text-shadow:0 0 1px #342,1px 1px 1px #453}
</style><div class="ball">55</div><div class="bar"><span>中</span>${ic('moon')}<span>简</span>${ic('keyboard')}</div><span class="mark">济溪</span><span class="url">www.gsean.org</span>`);
</script>
</body>
</html>
